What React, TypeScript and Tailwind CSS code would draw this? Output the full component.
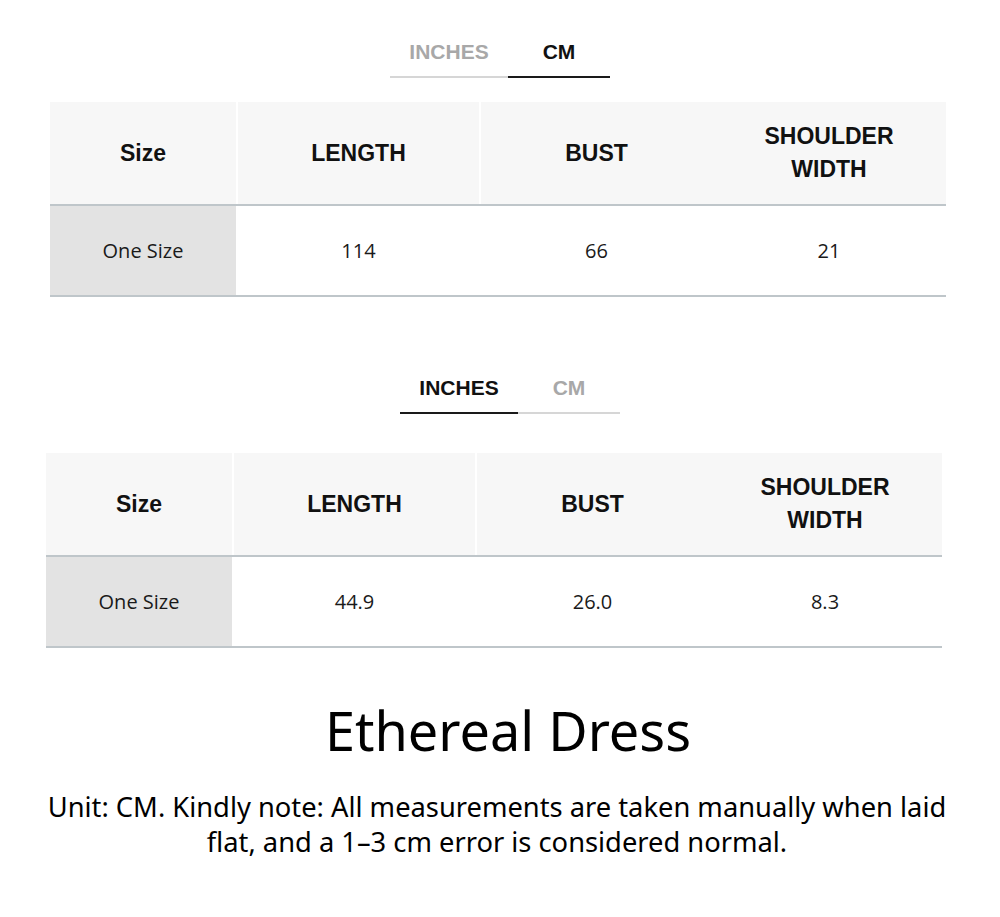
const headFont = { fontFamily: '"Liberation Sans", Arial, sans-serif' };

type Row = { length: string; bust: string; shoulder: string };

function UnitTabs({ active, left }: { active: 'in' | 'cm'; left: string }) {
    const on = 'text-[#111111] border-[#1a1a1a]';
    const off = 'text-[#a8a8a8] border-[#d6d6d6]';
    return (
        <div className={`flex ${left}`} style={headFont}>
            <div
                className={`w-[118px] h-[38px] border-b-2 text-center text-[21px] leading-[24px] font-bold ${active === 'in' ? on : off}`}
            >
                INCHES
            </div>
            <div
                className={`w-[102px] h-[38px] border-b-2 text-center text-[21px] leading-[24px] font-bold ${active === 'cm' ? on : off}`}
            >
                CM
            </div>
        </div>
    );
}

function SizeTable({ row, left }: { row: Row; left: string }) {
    const cols = 'grid grid-cols-[186px_2px_241px_2px_231px_234px]';
    return (
        <div className={`w-[896px] ${left}`}>
            {/* header */}
            <div className={`${cols} h-[104px] bg-[#f7f7f7] border-b-2 border-[#bfc6ca] text-[#111111] text-[23px] font-bold`} style={headFont}>
                <div className="flex items-center justify-center">Size</div>
                <div className="bg-white" />
                <div className="flex items-center justify-center">LENGTH</div>
                <div className="bg-white" />
                <div className="flex items-center justify-center">BUST</div>
                <div className="flex items-center justify-center text-center leading-[33px]">
                    SHOULDER
                    <br />
                    WIDTH
                </div>
            </div>
            {/* body */}
            <div
                className={`${cols} h-[91px] border-b-2 border-[#bfc6ca] text-[#1a1a1a] text-[20px]`}
                style={{ fontFamily: '"Open Sans", "Noto Sans", sans-serif' }}
            >
                <div className="flex items-center justify-center bg-[#e3e3e3]">One Size</div>
                <div />
                <div className="flex items-center justify-center">{row.length}</div>
                <div />
                <div className="flex items-center justify-center">{row.bust}</div>
                <div className="flex items-center justify-center">{row.shoulder}</div>
            </div>
        </div>
    );
}

export default function App() {
    return (
        <div className="w-[1000px] h-[917px] bg-white pt-[40px]">
            <UnitTabs active="cm" left="ml-[390px]" />
            <div className="mt-[24px]">
                <SizeTable row={{ length: '114', bust: '66', shoulder: '21' }} left="ml-[50px]" />
            </div>

            <div className="mt-[79px]">
                <UnitTabs active="in" left="ml-[400px]" />
            </div>
            <div className="mt-[39px]">
                <SizeTable row={{ length: '44.9', bust: '26.0', shoulder: '8.3' }} left="ml-[46px]" />
            </div>

            <h1
                className="mt-[49px] text-center text-[54px] leading-[67px] text-black ml-[16px]"
                style={{ fontFamily: '"Noto Sans", sans-serif' }}
            >
                Ethereal Dress
            </h1>
            <p
                className="mt-[25px] w-[920px] ml-[37px] text-center text-[27.3px] leading-[35px] text-black"
                style={{ fontFamily: '"Noto Sans", sans-serif' }}
            >
                Unit: CM. Kindly note: All measurements are taken manually when laid
                <br />
                flat, and a 1–3 cm error is considered normal.
            </p>
        </div>
    );
}
